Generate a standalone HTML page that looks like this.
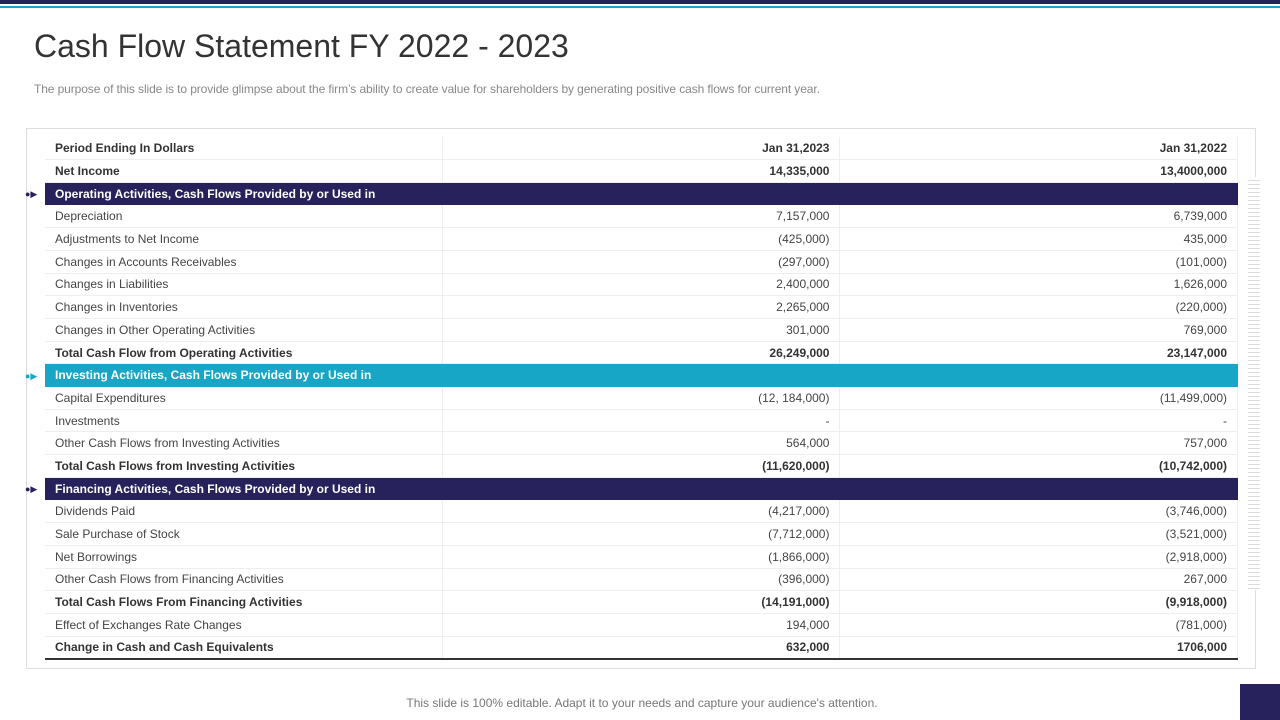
<!DOCTYPE html><html><head><style>
body{margin:0;width:1280px;height:720px;background:#fff;position:relative;overflow:hidden;font-family:"Liberation Sans",sans-serif;}
.a{position:absolute}
table{position:absolute;left:45px;top:137px;width:1193px;border-collapse:collapse;font-size:12px;color:#444;}
td{height:21.7px;padding:0 10px;border-bottom:1px solid #eee;border-right:1px solid #eee;box-sizing:border-box}
tr{height:22.7px}
td:nth-child(1){width:398px}td:nth-child(2),td:nth-child(3){text-align:right;width:398px}
tr.b td{font-weight:bold;color:#333}
tr.n td{background:#27215c;color:#fff;font-weight:bold;border:none}
tr.t td{background:#17a6c6;color:#fff;font-weight:bold;border:none}
tr.last td{border-bottom:2px solid #333}
.arr{position:absolute;left:25px;font-size:9px}
</style></head><body>
<div class="a" style="left:0;top:0;width:1280px;height:4px;background:#27215c"></div>
<div class="a" style="left:0;top:6px;width:1280px;height:2px;background:#17a6c6"></div>
<div class="a" style="left:34px;top:28px;font-size:32px;color:#333;letter-spacing:0px">Cash Flow Statement FY 2022 - 2023</div>
<div class="a" style="left:34px;top:82px;font-size:12px;color:#888;letter-spacing:-0.1px">The purpose of this slide is to provide glimpse about the firm’s ability to create value for shareholders by generating positive cash flows for current year.</div>
<div class="a" style="left:26px;top:128px;width:1228px;height:539px;border:1px solid #ddd"></div>
<div class="a" style="left:1248px;top:177px;width:12px;height:413px;background:repeating-linear-gradient(#fff 0 3px,#ddd 3px 4px)"></div>
<div class="arr" style="top:189px;color:#27215c">●▶</div>
<div class="arr" style="top:371px;color:#17a6c6">●▶</div>
<div class="arr" style="top:484px;color:#27215c">●▶</div>
<table>
<tr class="b"><td>Period Ending In Dollars</td><td>Jan 31,2023</td><td>Jan 31,2022</td></tr>
<tr class="b"><td>Net Income</td><td>14,335,000</td><td>13,4000,000</td></tr>
<tr class="n"><td>Operating Activities, Cash Flows Provided by or Used in</td><td></td><td></td></tr>
<tr><td>Depreciation</td><td>7,157,000</td><td>6,739,000</td></tr>
<tr><td>Adjustments to Net Income</td><td>(425,000)</td><td>435,000</td></tr>
<tr><td>Changes in Accounts Receivables</td><td>(297,000)</td><td>(101,000)</td></tr>
<tr><td>Changes in Liabilities</td><td>2,400,000</td><td>1,626,000</td></tr>
<tr><td>Changes in Inventories</td><td>2,265,000</td><td>(220,000)</td></tr>
<tr><td>Changes in Other Operating Activities</td><td>301,000</td><td>769,000</td></tr>
<tr class="b"><td>Total Cash Flow from Operating Activities</td><td>26,249,000</td><td>23,147,000</td></tr>
<tr class="t"><td>Investing Activities, Cash Flows Provided by or Used in</td><td></td><td></td></tr>
<tr><td>Capital Expenditures</td><td>(12, 184,000)</td><td>(11,499,000)</td></tr>
<tr><td>Investments</td><td>-</td><td>-</td></tr>
<tr><td>Other Cash Flows from Investing Activities</td><td>564,000</td><td>757,000</td></tr>
<tr class="b"><td>Total Cash Flows from Investing Activities</td><td>(11,620,000)</td><td>(10,742,000)</td></tr>
<tr class="n"><td>Financing Activities, Cash Flows Provided by or Used in</td><td></td><td></td></tr>
<tr><td>Dividends Paid</td><td>(4,217,000)</td><td>(3,746,000)</td></tr>
<tr><td>Sale Purchase of Stock</td><td>(7,712,000)</td><td>(3,521,000)</td></tr>
<tr><td>Net Borrowings</td><td>(1,866,000)</td><td>(2,918,000)</td></tr>
<tr><td>Other Cash Flows from Financing Activities</td><td>(396,000)</td><td>267,000</td></tr>
<tr class="b"><td>Total Cash Flows From Financing Activities</td><td>(14,191,000)</td><td>(9,918,000)</td></tr>
<tr><td>Effect of Exchanges Rate Changes</td><td>194,000</td><td>(781,000)</td></tr>
<tr class="b last"><td>Change in Cash and Cash Equivalents</td><td>632,000</td><td>1706,000</td></tr>
</table>
<div class="a" style="left:0;width:1284px;top:696px;text-align:center;font-size:12px;color:#777">This slide is 100% editable. Adapt it to your needs and capture your audience's attention.</div>
<div class="a" style="left:1240px;top:684px;width:40px;height:36px;background:#27215c"></div>
</body></html>
